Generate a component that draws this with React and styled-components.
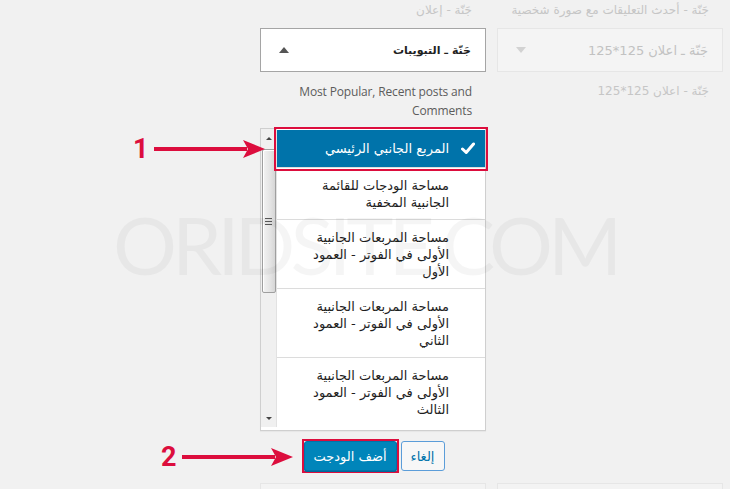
import React from "react";
import styled, { createGlobalStyle } from "styled-components";

const GlobalStyle = createGlobalStyle`
  html, body { margin: 0; padding: 0; background: #f1f1f1; }
  body { font-family: "Open Sans", "DejaVu Sans", sans-serif; }
  * { box-sizing: border-box; }
`;

const RED = "#dc0d3d";
const ARABIC = `"DejaVu Sans", "Noto Sans", sans-serif`;

const Page = styled.div`
  position: relative;
  width: 730px;
  height: 489px;
  overflow: hidden;
  background: #f1f1f1;
`;

const Columns = styled.div`
  position: relative;
  display: flex;
  gap: 11px;
  padding-left: 260px;
  height: 489px;
`;

const Column = styled.div`
  width: 226px;
  height: 489px;
  display: flex;
  flex-direction: column;
  direction: rtl;
`;

const FadedTitle = styled.div`
  height: 20px;
  padding: 0 14px;
  font-family: ${ARABIC};
  font-size: 12px;
  line-height: 20px;
  color: #c6c6c6;
  white-space: nowrap;
`;

const WidgetHeader = styled.div`
  margin-top: 8px;
  height: 44px;
  display: flex;
  align-items: center;
  justify-content: space-between;
  padding: 0 14px 0 18px;
  background: ${(p) => (p.$faded ? "#f4f4f4" : "#ffffff")};
  border: 1px solid ${(p) => (p.$faded ? "#e6e6e6" : "#a5a5a5")};
  font-family: ${ARABIC};
  font-size: ${(p) => (p.$faded ? "13px" : "11px")};
  font-weight: ${(p) => (p.$faded ? 400 : 700)};
  color: ${(p) => (p.$faded ? "#c2c2c2" : "#222")};
`;

const Caret = styled.span`
  width: 0;
  height: 0;
  border-left: 5px solid transparent;
  border-right: 5px solid transparent;
  ${(p) =>
    p.$up
      ? `border-bottom: 6px solid #555;`
      : `border-top: 6px solid #d2d2d2;`}
`;

const Description = styled.div`
  padding: 10px 14px 0;
  font-size: 12px;
  line-height: 19px;
  text-align: right;
  color: ${(p) => (p.$faded ? "#c6c6c6" : "#5c5c5c")};
  font-family: ${(p) => (p.$arabic ? ARABIC : `"Open Sans", sans-serif`)};
  letter-spacing: ${(p) => (p.$arabic ? "0" : "-0.15px")};
`;

const ListBox = styled.div`
  margin-top: 8px;
  direction: ltr;
  display: flex;
  background: #ffffff;
  border: 1px solid #cfcfcf;
  padding: 1px 0 3px 0;
  box-shadow: 0 1px 1px rgba(0, 0, 0, 0.04);
`;

const ScrollBar = styled.div`
  width: 16px;
  display: flex;
  flex-direction: column;
  align-items: center;
  background: #f0f0f0;
  border-right: 1px solid #e2e2e2;
  margin-top: -1px;
`;

const ScrollArrow = styled.div`
  height: 18px;
  width: 16px;
  display: flex;
  align-items: center;
  justify-content: center;
  &::after {
    content: "";
    border-left: 3px solid transparent;
    border-right: 3px solid transparent;
    ${(p) =>
      p.$down
        ? `border-top: 3px solid #444;`
        : `border-bottom: 3px solid #444;`}
  }
`;

const Thumb = styled.div`
  width: 14px;
  height: 144px;
  margin-top: 2px;
  border: 1px solid #9f9f9f;
  border-radius: 2px;
  background: linear-gradient(to right, #f3f3f3, #e4e4e4 60%, #d6d6d6);
  display: flex;
  align-items: center;
  justify-content: center;
  box-shadow: inset 1px 1px 0 #fff;
`;

const Grip = styled.div`
  width: 7px;
  height: 7px;
  background: repeating-linear-gradient(
    to bottom,
    #5a5a5a 0,
    #5a5a5a 1px,
    transparent 1px,
    transparent 3px
  );
`;

const Track = styled.div`
  flex: 1;
`;

const Items = styled.ul`
  list-style: none;
  margin: 0;
  padding: 0;
  flex: 1;
  direction: rtl;
`;

const Item = styled.li`
  display: flex;
  align-items: center;
  gap: 12px;
  padding: ${(p) => (p.$selected ? "10px 10px 10px 12px" : "9px 36px 8px 12px")};
  border-bottom: 1px solid ${(p) => (p.$last ? "transparent" : "#dcdcdc")};
  background: ${(p) => (p.$selected ? "#0073aa" : "#ffffff")};
  color: ${(p) => (p.$selected ? "#ffffff" : "#1e1e1e")};
  font-family: ${ARABIC};
  font-size: 13px;
  line-height: 17px;
  ${(p) =>
    p.$selected &&
    `outline: 2px solid ${RED}; outline-offset: 1px; position: relative;`}
`;

const CheckIcon = () => (
  <svg width="14" height="13" viewBox="0 0 14 13" aria-hidden="true">
    <path
      d="M1.5 7 L5.2 10.5 L12.5 2"
      fill="none"
      stroke="#ffffff"
      strokeWidth="3"
      strokeLinecap="round"
      strokeLinejoin="round"
    />
  </svg>
);

const ButtonRow = styled.div`
  margin-top: 8px;
  direction: ltr;
  display: flex;
  justify-content: center;
  align-items: center;
  gap: 2px;
`;

const Highlight = styled.div`
  border: 2px solid ${RED};
  display: flex;
`;

const Button = styled.button`
  height: 30px;
  width: ${(p) => p.$w}px;
  padding: 0;
  border-radius: 3px;
  font-family: ${ARABIC};
  font-size: 13px;
  cursor: pointer;
  background: ${(p) => (p.$primary ? "#0085ba" : "#f7f7f7")};
  color: ${(p) => (p.$primary ? "#ffffff" : "#0073aa")};
  border: 1px solid ${(p) => (p.$primary ? "#0073aa" : "#5b9dd9")};
  box-shadow: ${(p) => (p.$primary ? "0 1px 0 #006799" : "none")};
`;

const BottomBox = styled.div`
  margin-top: auto;
  height: 6px;
  background: #f3f3f3;
  border: 1px solid #e6e6e6;
  border-bottom: none;
`;

const Watermark = styled.div`
  position: absolute;
  left: 113px;
  top: 196px;
  font-family: Lato, "Open Sans", sans-serif;
  font-weight: 400;
  font-size: 80px;
  letter-spacing: -5px;
  line-height: 96px;
  color: rgba(0, 0, 0, 0.04);
  pointer-events: none;
  white-space: nowrap;
  z-index: 1;
`;

const Annotation = styled.div`
  position: absolute;
  left: ${(p) => p.$x}px;
  top: ${(p) => p.$y}px;
  display: flex;
  align-items: center;
  gap: 5px;
  color: ${RED};
  font-family: Roboto, "Liberation Sans", sans-serif;
  font-weight: 700;
  font-size: 27px;
  line-height: 30px;
  pointer-events: none;
  z-index: 2;
`;

const Arrow = ({ length }) => (
  <svg width={length} height="20" viewBox={`0 0 ${length} 20`} aria-hidden="true">
    <rect x="0" y="8" width={length - 18} height="4" fill={RED} />
    <path d={`M${length - 22} 1 L${length} 10 L${length - 22} 19 L${length - 17} 10 Z`} fill={RED} />
  </svg>
);

const items = [
  "مساحة الودجات للقائمة الجانبية المخفية",
  "مساحة المربعات الجانبية الأولى في الفوتر - العمود الأول",
  "مساحة المربعات الجانبية الأولى في الفوتر - العمود الثاني",
  "مساحة المربعات الجانبية الأولى في الفوتر - العمود الثالث",
];

export default function App() {
  return (
    <Page>
      <GlobalStyle />
      <Columns>
        <Column>
          <FadedTitle>جَنّة - إعلان</FadedTitle>
          <WidgetHeader>
            <span>جَنّة ـ التبويبات</span>
            <Caret $up />
          </WidgetHeader>
          <Description dir="ltr">
            Most Popular, Recent posts and Comments
          </Description>
          <ListBox>
            <ScrollBar>
              <ScrollArrow />
              <Thumb>
                <Grip />
              </Thumb>
              <Track />
              <ScrollArrow $down />
            </ScrollBar>
            <Items>
              <Item $selected>
                <CheckIcon />
                <span>المربع الجانبي الرئيسي</span>
              </Item>
              {items.map((t, i) => (
                <Item key={i} $last={i === items.length - 1}>
                  <span>{t}</span>
                </Item>
              ))}
            </Items>
          </ListBox>
          <ButtonRow>
            <Highlight>
              <Button $primary $w={93}>أضف الودجت</Button>
            </Highlight>
            <Button $w={44}>إلغاء</Button>
          </ButtonRow>
          <BottomBox />
        </Column>
        <Column>
          <FadedTitle>جَنّة - أحدث التعليقات مع صورة شخصية</FadedTitle>
          <WidgetHeader $faded>
            <span>جَنّة ـ اعلان 125*125</span>
            <Caret />
          </WidgetHeader>
          <Description $faded $arabic>
            جَنّة - اعلان 125*125
          </Description>
          <BottomBox />
        </Column>
      </Columns>
      <Watermark aria-hidden="true">ORIDSITE.COM</Watermark>
      <Annotation $x={133} $y={134}>
        <span>1</span>
        <Arrow length={111} />
      </Annotation>
      <Annotation $x={161} $y={442}>
        <span>2</span>
        <Arrow length={111} />
      </Annotation>
    </Page>
  );
}
